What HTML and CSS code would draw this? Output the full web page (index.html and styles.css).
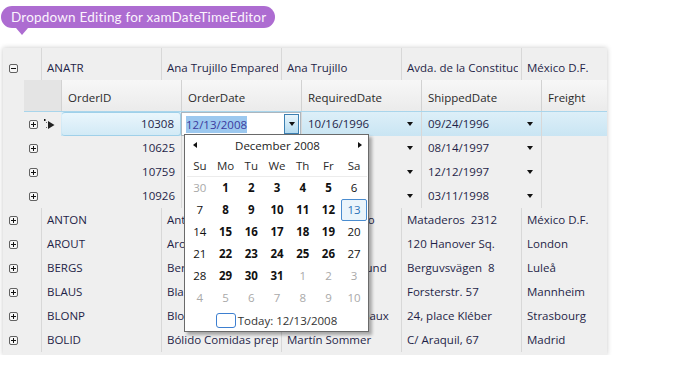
FILE: index.html
```html
<!DOCTYPE html>
<html>
<head>
<meta charset="utf-8">
<link rel="stylesheet" href="styles.css">
</head>
<body>
<div class="badge">Dropdown Editing for xamDateTimeEditor</div>
<div class="grid">
  <div class="prow first">
    <div class="exp"><svg width="9" height="9"><rect x=".5" y=".5" width="8" height="8" rx="1.5" fill="#f6f6f6" stroke="#626262"/><path d="M2 4.5h5" stroke="#111"/></svg></div>
    <div class="cell">ANATR</div>
    <div class="cell">Ana Trujillo Emparedados y helados</div>
    <div class="cell">Ana Trujillo</div>
    <div class="cell">Avda. de la Constitución 2222</div>
    <div class="cell last">México D.F.</div>
  </div>
  <div class="child">
    <div class="hrow">
      <div class="hsel"></div>
      <div class="hcell">OrderID</div>
      <div class="hcell">OrderDate</div>
      <div class="hcell">RequiredDate</div>
      <div class="hcell">ShippedDate</div>
      <div class="hcell last">Freight</div>
    </div>
    <div class="crow active">
      <div class="csel"><svg class="pbox" width="9" height="9"><rect x=".5" y=".5" width="8" height="8" rx="1.5" fill="#f6f6f6" stroke="#626262"/><path d="M2 4.5h5M4.5 2v5" stroke="#111"/></svg><svg class="ind" width="13" height="11"><rect x="1" y="0" width="1.5" height="2" fill="#111"/><path d="M5 2L11.5 6L5 10Z" fill="#222"/><rect x="3" y="3" width="1" height="1" fill="#666"/><rect x="3" y="8" width="1" height="1" fill="#666"/></svg></div>
      <div class="ccell num idcell">10308</div>
      <div class="ccell edit">
        <span class="seltext">12/13/2008</span>
        <span class="ddbtn"><span class="tri"></span></span>
        <div class="popup">
          <div class="cal-head"><span class="ar left"></span><span class="title">December 2008</span><span class="ar right"></span></div>
          <div class="dow"><span>Su</span><span>Mo</span><span>Tu</span><span>We</span><span>Th</span><span>Fr</span><span>Sa</span></div>
          <div class="days">
            <span class="o">30</span><span class="b">1</span><span class="b">2</span><span class="b">3</span><span class="b">4</span><span class="b">5</span><span>6</span>
            <span>7</span><span class="b">8</span><span class="b">9</span><span class="b">10</span><span class="b">11</span><span class="b">12</span><span class="sel">13</span>
            <span>14</span><span class="b">15</span><span class="b">16</span><span class="b">17</span><span class="b">18</span><span class="b">19</span><span>20</span>
            <span>21</span><span class="b">22</span><span class="b">23</span><span class="b">24</span><span class="b">25</span><span class="b">26</span><span>27</span>
            <span>28</span><span class="b">29</span><span class="b">30</span><span class="b">31</span><span class="o">1</span><span class="o">2</span><span class="o">3</span>
            <span class="o">4</span><span class="o">5</span><span class="o">6</span><span class="o">7</span><span class="o">8</span><span class="o">9</span><span class="o">10</span>
          </div>
          <div class="today"><span class="tbox"></span><span>Today: 12/13/2008</span></div>
        </div>
      </div>
      <div class="ccell date"><span>10/16/1996</span><span class="tri"></span></div>
      <div class="ccell date"><span>09/24/1996</span><span class="tri"></span></div>
      <div class="ccell last"></div>
    </div>
    <div class="crow">
      <div class="csel"><svg class="pbox" width="9" height="9"><rect x=".5" y=".5" width="8" height="8" rx="1.5" fill="#f6f6f6" stroke="#626262"/><path d="M2 4.5h5M4.5 2v5" stroke="#111"/></svg></div>
      <div class="ccell num">10625</div>
      <div class="ccell date"><span>09/08/1997</span><span class="tri"></span></div>
      <div class="ccell date"><span>10/06/1997</span><span class="tri"></span></div>
      <div class="ccell date"><span>08/14/1997</span><span class="tri"></span></div>
      <div class="ccell last"></div>
    </div>
    <div class="crow">
      <div class="csel"><svg class="pbox" width="9" height="9"><rect x=".5" y=".5" width="8" height="8" rx="1.5" fill="#f6f6f6" stroke="#626262"/><path d="M2 4.5h5M4.5 2v5" stroke="#111"/></svg></div>
      <div class="ccell num">10759</div>
      <div class="ccell date"><span>11/28/1997</span><span class="tri"></span></div>
      <div class="ccell date"><span>12/26/1997</span><span class="tri"></span></div>
      <div class="ccell date"><span>12/12/1997</span><span class="tri"></span></div>
      <div class="ccell last"></div>
    </div>
    <div class="crow">
      <div class="csel"><svg class="pbox" width="9" height="9"><rect x=".5" y=".5" width="8" height="8" rx="1.5" fill="#f6f6f6" stroke="#626262"/><path d="M2 4.5h5M4.5 2v5" stroke="#111"/></svg></div>
      <div class="ccell num">10926</div>
      <div class="ccell date"><span>03/04/1998</span><span class="tri"></span></div>
      <div class="ccell date"><span>04/01/1998</span><span class="tri"></span></div>
      <div class="ccell date"><span>03/11/1998</span><span class="tri"></span></div>
      <div class="ccell last"></div>
    </div>
  </div>
  <div class="prow">
    <div class="exp"><svg width="9" height="9"><rect x=".5" y=".5" width="8" height="8" rx="1.5" fill="#f6f6f6" stroke="#626262"/><path d="M2 4.5h5M4.5 2v5" stroke="#111"/></svg></div>
    <div class="cell">ANTON</div>
    <div class="cell">Antonio Moreno Taquería</div>
    <div class="cell">Antonio Moreno</div>
    <div class="cell">Mataderos&nbsp; 2312</div>
    <div class="cell last">México D.F.</div>
  </div>
  <div class="prow">
    <div class="exp"><svg width="9" height="9"><rect x=".5" y=".5" width="8" height="8" rx="1.5" fill="#f6f6f6" stroke="#626262"/><path d="M2 4.5h5M4.5 2v5" stroke="#111"/></svg></div>
    <div class="cell">AROUT</div>
    <div class="cell">Around the Horn</div>
    <div class="cell">Thomas Hardy</div>
    <div class="cell">120 Hanover Sq.</div>
    <div class="cell last">London</div>
  </div>
  <div class="prow">
    <div class="exp"><svg width="9" height="9"><rect x=".5" y=".5" width="8" height="8" rx="1.5" fill="#f6f6f6" stroke="#626262"/><path d="M2 4.5h5M4.5 2v5" stroke="#111"/></svg></div>
    <div class="cell">BERGS</div>
    <div class="cell">Berglunds snabbköp</div>
    <div class="cell">Christina Berglund</div>
    <div class="cell">Berguvsvägen&nbsp; 8</div>
    <div class="cell last">Luleå</div>
  </div>
  <div class="prow">
    <div class="exp"><svg width="9" height="9"><rect x=".5" y=".5" width="8" height="8" rx="1.5" fill="#f6f6f6" stroke="#626262"/><path d="M2 4.5h5M4.5 2v5" stroke="#111"/></svg></div>
    <div class="cell">BLAUS</div>
    <div class="cell">Blauer See Delikatessen</div>
    <div class="cell">Hanna Moos</div>
    <div class="cell">Forsterstr. 57</div>
    <div class="cell last">Mannheim</div>
  </div>
  <div class="prow">
    <div class="exp"><svg width="9" height="9"><rect x=".5" y=".5" width="8" height="8" rx="1.5" fill="#f6f6f6" stroke="#626262"/><path d="M2 4.5h5M4.5 2v5" stroke="#111"/></svg></div>
    <div class="cell">BLONP</div>
    <div class="cell">Blondesddsl père et fils</div>
    <div class="cell">Frédérique Citeaux</div>
    <div class="cell">24, place Kléber</div>
    <div class="cell last">Strasbourg</div>
  </div>
  <div class="prow">
    <div class="exp"><svg width="9" height="9"><rect x=".5" y=".5" width="8" height="8" rx="1.5" fill="#f6f6f6" stroke="#626262"/><path d="M2 4.5h5M4.5 2v5" stroke="#111"/></svg></div>
    <div class="cell">BOLID</div>
    <div class="cell">Bólido Comidas preparadas</div>
    <div class="cell">Martín Sommer</div>
    <div class="cell">C/ Araquil, 67</div>
    <div class="cell last">Madrid</div>
  </div>
</div>
</body>
</html>
```

FILE: styles.css
```css
body {
  margin: 0;
  background: #fff;
  font-family: "Open Sans", "Noto Sans", sans-serif;
  font-size: 11.5px;
  color: #1f1f48;
}

.badge {
  position: relative;
  width: max-content;
  margin: 6px 0 0 1px;
  height: 22px;
  line-height: 22px;
  padding: 0 9px 0 10px;
  border-radius: 11px;
  background: #ad6cd1;
  color: #fbf3fd;
  font-family: Lato, "Open Sans", sans-serif;
  font-size: 13.5px;
  letter-spacing: 0.2px;
}
.badge::after {
  content: "";
  position: absolute;
  left: 15px;
  top: 22px;
  border-left: 6px solid transparent;
  border-right: 6px solid transparent;
  border-top: 7px solid #ad6cd1;
}

.grid {
  margin: 20px 0 0 3px;
  width: 604px;
  background: #efefef;
  box-shadow: 0 0 5px rgba(0, 0, 0, 0.22);
  padding-bottom: 3px;
}

.prow {
  display: flex;
  height: 24px;
}
.prow.first {
  height: 32px;
}
.exp {
  flex: none;
  width: 38px;
  box-sizing: border-box;
  padding-left: 6px;
  display: flex;
  align-items: center;
}
.exp svg { display: block; }
.prow.first .exp {
  padding-top: 8px;
}
.cell {
  flex: none;
  width: 117px;
  margin-right: 3px;
  box-sizing: border-box;
  border-left: 1px solid #d8d8d8;
  padding-left: 5px;
  line-height: 24px;
  white-space: nowrap;
  overflow: hidden;
}
.cell.last {
  width: 83px;
}
.prow.first .cell {
  padding-top: 8px;
}

.child {
  margin-left: 21px;
}
.hrow {
  display: flex;
  height: 31px;
  border-bottom: 1px solid #a9d5eb;
}
.hsel {
  flex: none;
  width: 37px;
  background: #e4e4e4;
}
.hcell {
  flex: none;
  width: 120px;
  box-sizing: border-box;
  border-left: 1px solid #d2d2d2;
  padding: 4px 0 0 6px;
  line-height: 27px;
  background: linear-gradient(#f7f7f7, #ebebeb);
  color: #2a2a2a;
}
.hcell.last {
  width: 66px;
}

.crow {
  display: flex;
  height: 24px;
}
.crow.active {
  background: linear-gradient(#ddeff8, #c9e5f3);
}
.csel {
  flex: none;
  width: 37px;
  box-sizing: border-box;
  padding-left: 5px;
  display: flex;
  align-items: center;
  background: #efefef;
}
.pbox { display: block; }
.ind {
  display: block;
  margin-left: 5px;
}
.ccell {
  flex: none;
  width: 120px;
  box-sizing: border-box;
  border-left: 1px solid #d8d8d8;
  padding-left: 6px;
  line-height: 24px;
  white-space: nowrap;
  position: relative;
}
.ccell.last {
  width: 66px;
}
.ccell.num {
  border-left: none;
  text-align: right;
  padding-right: 6px;
}
.idcell {
  border: 1px solid #9fd0e9;
  border-radius: 3px;
  background: linear-gradient(#eaf6fc, #d2eaf6);
  line-height: 22px;
  margin-left: 1px;
  width: 119px;
  padding-right: 5px;
}
.date {
  display: flex;
  justify-content: space-between;
  align-items: center;
  padding-right: 8px;
}
.tri {
  width: 0;
  height: 0;
  border-left: 3.5px solid transparent;
  border-right: 3.5px solid transparent;
  border-top: 4px solid #111;
}

.edit {
  background: #fff;
  border: 1px solid #abb6bf;
  padding-left: 4px;
  padding-right: 1px;
  display: flex;
  align-items: center;
  justify-content: space-between;
  z-index: 5;
}
.seltext {
  background: #9cc8ef;
  color: #3b3a9e;
  line-height: 17px;
}
.ddbtn {
  width: 15px;
  height: 20px;
  box-sizing: border-box;
  border: 1px solid #3c7fb1;
  background: linear-gradient(#e8f5fc, #b4dbf0);
  display: flex;
  align-items: center;
  justify-content: center;
}

.popup {
  position: absolute;
  left: 2px;
  top: 21px;
  width: 185px;
  height: 198px;
  box-sizing: border-box;
  border: 1px solid #6a6a6a;
  background: #fff;
  box-shadow: 3px 3px 3px rgba(0, 0, 0, 0.3);
  color: #111;
  z-index: 10;
  line-height: normal;
}
.cal-head {
  height: 20px;
  display: flex;
  align-items: center;
  justify-content: space-between;
  padding: 0 6px 0 8px;
}
.ar {
  width: 0;
  height: 0;
  border-top: 3.5px solid transparent;
  border-bottom: 3.5px solid transparent;
}
.ar.left { border-right: 4px solid #111; }
.ar.right { border-left: 4px solid #111; }
.title { color: #222; }
.dow {
  display: grid;
  grid-template-columns: repeat(7, 1fr);
  width: 180px;
  margin-left: 2px;
  height: 21px;
  line-height: 21px;
  text-align: center;
  border-bottom: 1px solid #ececec;
  color: #2a2a2a;
}
.days {
  display: grid;
  grid-template-columns: repeat(7, 1fr);
  grid-auto-rows: 22px;
  width: 180px;
  margin-left: 2px;
  text-align: center;
  line-height: 22px;
}
.days .b { font-weight: 700; }
.days .o { color: #a9a9a9; }
.days .sel {
  border: 1px solid #4a8ccf;
  border-radius: 2px;
  background: #eaf4fb;
  color: #2a72b8;
  line-height: 20px;
}
.today {
  height: 22px;
  display: flex;
  align-items: center;
  justify-content: center;
  gap: 2px;
  color: #333;
}
.tbox {
  width: 20px;
  height: 15px;
  box-sizing: border-box;
  border: 1.5px solid #3d7fd0;
  border-radius: 3px;
}
```
